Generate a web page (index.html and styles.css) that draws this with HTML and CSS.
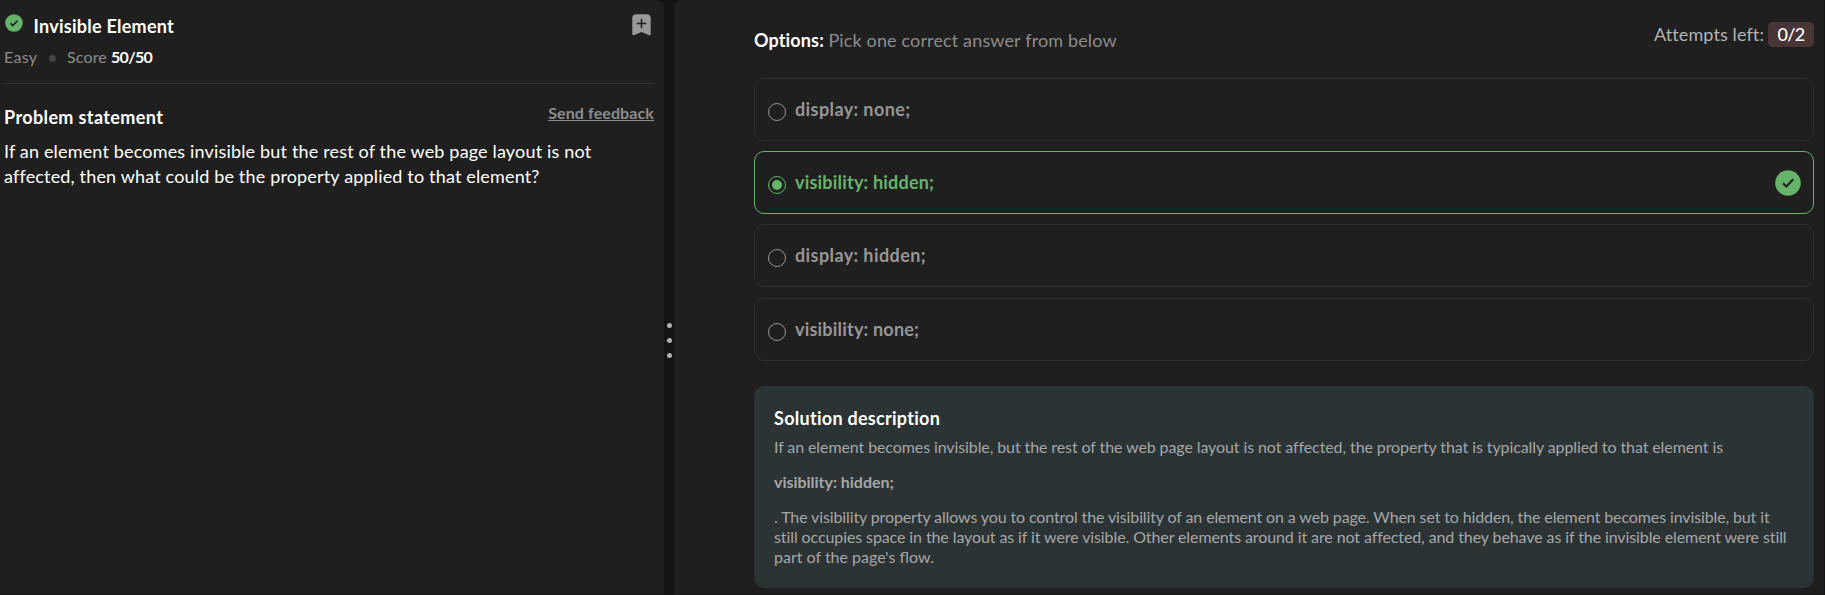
FILE: index.html
```html
<!DOCTYPE html>
<html lang="en">
<head>
<meta charset="utf-8">
<title>Invisible Element</title>
<link rel="stylesheet" href="styles.css">
</head>
<body>
<main class="split">
  <section class="panel problem">
    <header class="problem-head">
      <svg class="status" width="18" height="18" viewBox="0 0 18 18"><circle cx="9" cy="9" r="8.8" fill="#66b36a"/><path d="M5.5 9.2l2.3 2.3 4.7-4.8" fill="none" stroke="#1f1f1f" stroke-width="1.6"/></svg>
      <h1 class="title">Invisible Element</h1>
      <svg class="bookmark" width="19" height="22" viewBox="0 0 19 22"><path d="M4.5.3h10Q18.7.3 18.7 4.5v15.5q0 1.7-1.6 1.2L9.5 18l-7.600 3.200Q.3 21.700.3 20V4.500Q.3.3 4.500.3z" fill="#999"/><path d="M9.500 4.700v9.600M4.700 9.500h9.600" stroke="#1f1f1f" stroke-width="1.500"/></svg>
    </header>
    <div class="meta"><span class="level">Easy</span><i class="dot"></i><span class="score">Score</span><b class="points">50/50</b></div>
    <div class="statement-head">
      <h2 class="statement-title">Problem statement</h2>
      <a class="feedback">Send feedback</a>
    </div>
    <p class="statement">If an element becomes invisible but the rest of the web page layout is not<br>affected, then what could be the property applied to that element?</p>
  </section>
  <div class="gutter"><i></i><i></i><i></i></div>
  <section class="panel answers">
    <header class="answers-head">
      <div class="prompt"><b>Options:</b><span>Pick one correct answer from below</span></div>
      <div class="attempts"><span>Attempts left:</span><span class="badge">0/2</span></div>
    </header>
    <div class="options">
      <label class="option"><i class="radio"></i><span class="label wide">display: none;</span></label>
      <label class="option correct"><i class="radio"></i><span class="label">visibility: hidden;</span>
        <svg class="tick" width="26" height="26" viewBox="0 0 26 26"><circle cx="13" cy="13" r="12.800" fill="#66b36a"/><path d="M8 13.200l3.300 3.300 6.900-7.300" fill="none" stroke="#1f1f1f" stroke-width="2.100"/></svg>
      </label>
      <label class="option"><i class="radio"></i><span class="label wide">display: hidden;</span></label>
      <label class="option"><i class="radio"></i><span class="label">visibility: none;</span></label>
    </div>
    <article class="solution">
      <h2 class="solution-title">Solution description</h2>
      <p>If an element becomes invisible, but the rest of the web page layout is not affected, the property that is typically applied to that element is</p>
      <p class="strong">visibility: hidden;</p>
      <p><span class="tight">. The visibility property allows you to control the visibility of an element on a web page. When set to hidden, the element becomes invisible, but it</span><br>still occupies space in the layout as if it were visible. Other elements around it are not affected, and they behave as if the invisible element were still<br><span class="last">part of the page's flow.</span></p>
    </article>
  </section>
</main>
</body>
</html>
```
FILE: styles.css
```css
* { box-sizing: border-box; }
body {
  margin: 0;
  height: 595px;
  overflow: hidden;
  background: #141414;
  color: #fff;
  font: 400 18px/24px Lato, sans-serif;
}
h1, h2, p { margin: 0; font-size: 18px; line-height: 24px; }
svg { display: block; flex: none; }

.split { display: grid; grid-template-columns: 664px 10px 1150px; height: 594px; }
.panel { background: #1f1f1f; }
.problem { padding: 13px 10px 0 4px; border-top-right-radius: 8px; }
.answers { padding: 22px 10px 0 80px; border-top-left-radius: 8px; }

.problem-head { display: flex; align-items: flex-start; height: 34px; }
.status { margin: 1px 0 0 1px; }
.title { margin: 1px 0 0 10.6px; letter-spacing: .25px; }
.bookmark { margin: 1px 3px 0 auto; }

.meta {
  display: flex;
  height: 37px;
  border-bottom: 1px solid #303030;
  font-size: 16px;
  line-height: 20px;
  color: #8c8c8c;
}
.level { width: 45px; letter-spacing: .3px; }
.dot { width: 7px; height: 7px; margin: 8px 11px 0 0; border-radius: 50%; background: #444; }
.score { width: 44px; letter-spacing: .15px; }
.points { color: #fff; letter-spacing: -.7px; }

.statement-head { display: flex; justify-content: space-between; padding-top: 19px; height: 55px; }
.statement-title { padding-top: 2px; letter-spacing: .38px; }
.feedback {
  font-size: 16px;
  font-weight: 700;
  line-height: 20px;
  letter-spacing: .1px;
  color: #8c8c8c;
  text-decoration: underline;
  text-decoration-thickness: 1px;
  text-underline-offset: 1px;
}
.statement { line-height: 25px; letter-spacing: .165px; white-space: nowrap; }

.gutter { display: flex; flex-direction: column; align-items: center; gap: 10px; padding: 323px 0 0 1px; }
.gutter i { width: 5px; height: 5px; border-radius: 50%; background: #b0b0b0; }

.answers-head { display: flex; justify-content: space-between; height: 56px; }
.prompt { display: flex; gap: 4.500px; padding-top: 6px; color: #8c8c8c; letter-spacing: .14px; }
.prompt b { color: #fff; }
.attempts { display: flex; gap: 4px; line-height: 25px; color: #b3b3b3; letter-spacing: .1px; }
.badge {
  width: 46px;
  height: 25px;
  border-radius: 5px;
  background: #493538;
  color: #fff;
  font-weight: 500;
  text-align: center;
  letter-spacing: -.7px;
}

.options { display: grid; grid-template-rows: repeat(4, 63.1px); gap: 10.1px; }
.option {
  display: flex;
  align-items: flex-start;
  padding: 18px 12px 0 13px;
  border: 1px solid #2d2d2d;
  border-radius: 10px;
  color: #969696;
}
.radio {
  flex: none;
  display: grid;
  place-items: center;
  width: 18px;
  height: 18px;
  margin: 6px 9px 0 0;
  border: 1.500px solid currentColor;
  border-radius: 50%;
}
.label { font-weight: 700; letter-spacing: .2px; }
.label.wide { letter-spacing: .4px; }
.correct { border-color: #66b36a; color: #66b36a; }
.correct .radio::after { content: ""; width: 10px; height: 10px; border-radius: 50%; background: currentColor; }
.tick { margin: -.500px 0 0 auto; }

.solution {
  height: 202px;
  margin-top: 25.300px;
  padding: 20px 20px 0;
  border-radius: 10px;
  background: #2b3335;
  color: #a5a7a8;
  white-space: nowrap;
}
.solution-title { color: #fff; letter-spacing: .28px; margin-bottom: 7px; }
.solution p { font-size: 16px; line-height: 20px; letter-spacing: -.1px; margin-bottom: 15px; }
.solution .strong { font-weight: 700; letter-spacing: -.03px; }
.tight { letter-spacing: -.12px; }
.last { letter-spacing: 0; }
```
